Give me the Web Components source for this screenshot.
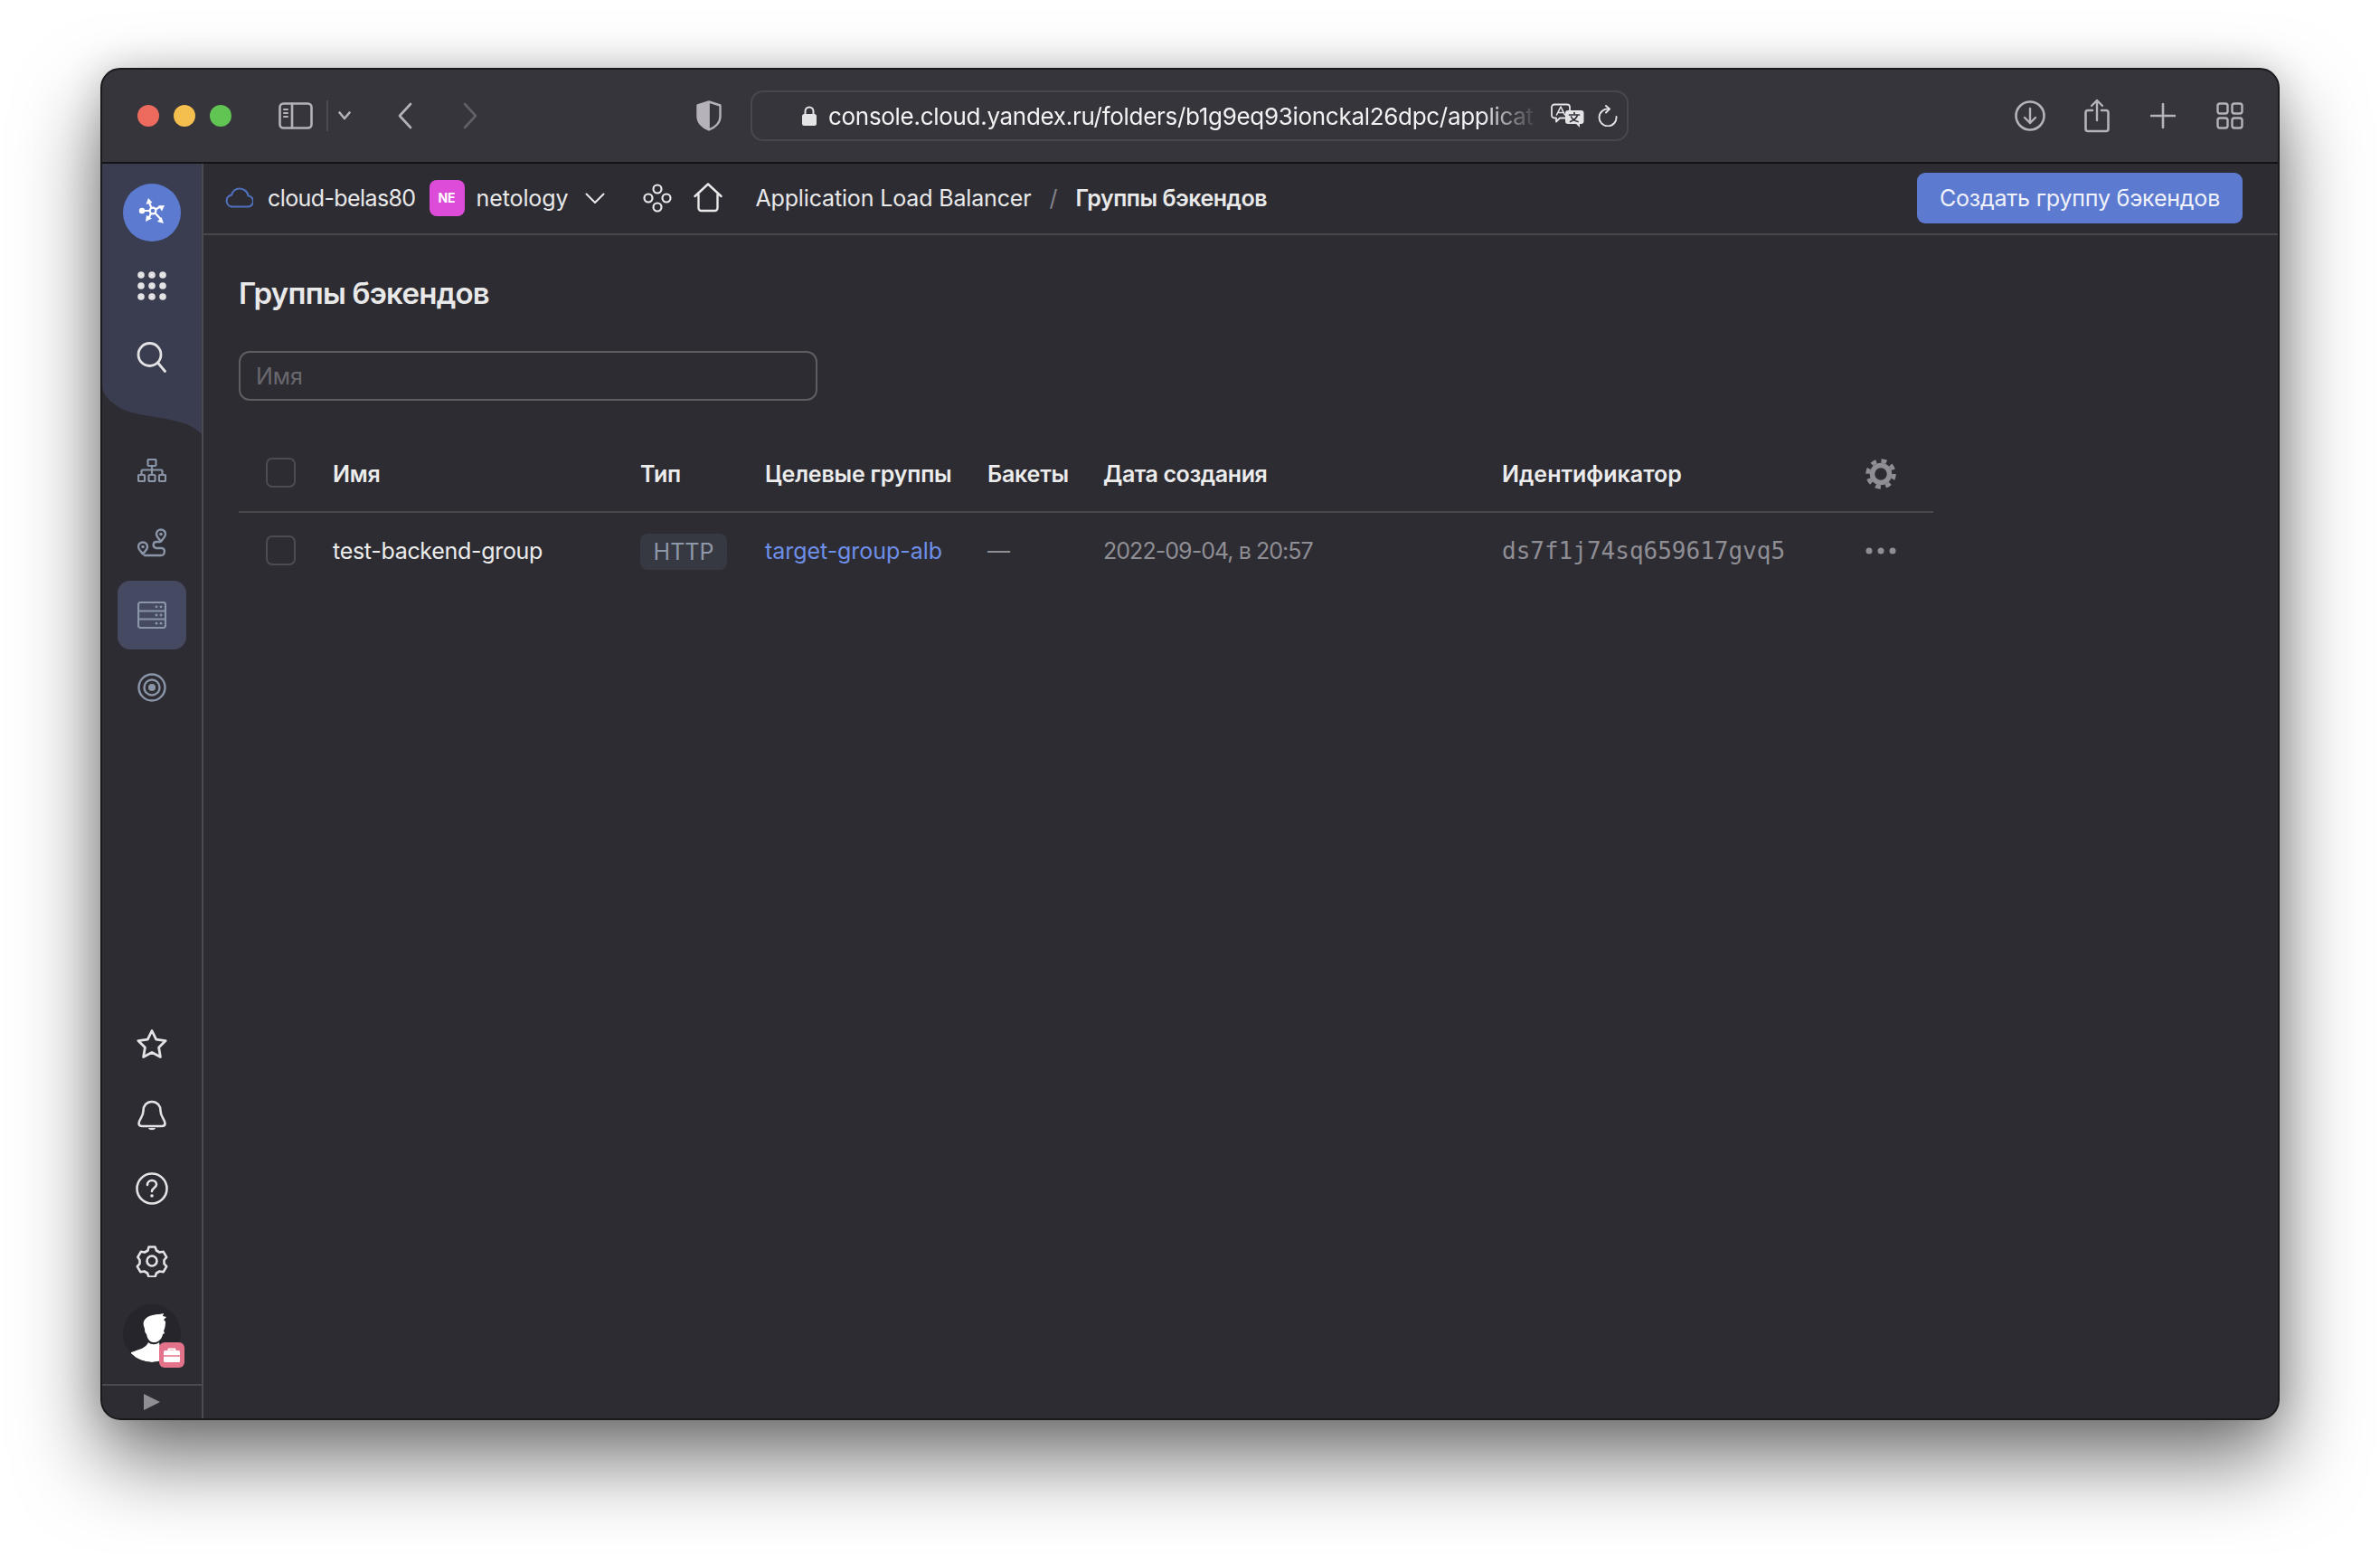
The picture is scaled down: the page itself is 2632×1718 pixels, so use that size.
<!doctype html>
<html>
<head>
<meta charset="utf-8">
<title>Группы бэкендов</title>
<style>
html,body{ margin:0; background:#fff; }
body{ width:2632px; height:1718px; overflow:hidden; font-family:"Inter","Noto Sans",sans-serif; }
</style>
</head>
<body>
<mac-window>
  <title-bar slot="top"></title-bar>
  <side-nav slot="side"></side-nav>
  <crumb-bar slot="crumbs"></crumb-bar>
  <backends-page></backends-page>
</mac-window>

<script>
// shared stroke helper for the small svg icons
const svg = (w, h, vb, body, extra = '') =>
  `<svg width="${w}" height="${h}" viewBox="${vb}" fill="none" stroke="currentColor" stroke-linecap="round" stroke-linejoin="round" ${extra}>${body}</svg>`;

customElements.define('mac-window', class extends HTMLElement {
  constructor(){ super(); this.attachShadow({mode:'open'});
    this.shadowRoot.innerHTML = `
    <style>
    :host{ display:block; padding:75px 111px 0 111px; }
    .win{
      width:2410px; height:1495px; box-sizing:border-box;
      background:#2d2c33; border-radius:22px; overflow:hidden;
      border:2px solid #1a1a1c;
      display:grid; grid-template-columns:112px 1fr; grid-template-rows:104px 79px 1fr;
    }
    .shadow{ border-radius:22px; box-shadow:0 44px 90px rgba(0,0,0,.55), 0 0 40px rgba(0,0,0,.16); width:2410px; }
    .top{ grid-column:1/-1; }
    .side{ grid-row:2/4; }
    </style>
    <div class="shadow"><div class="win">
      <div class="top"><slot name="top"></slot></div>
      <div class="side"><slot name="side"></slot></div>
      <div><slot name="crumbs"></slot></div>
      <div><slot></slot></div>
    </div></div>`;
  }
});

customElements.define('title-bar', class extends HTMLElement {
  constructor(){ super(); this.attachShadow({mode:'open'});
    this.shadowRoot.innerHTML = `
    <style>
    :host{ display:flex; height:104px; box-sizing:border-box; background:#37353c; border-bottom:2px solid #141416; align-items:center; padding:0 38px 0 39px; color:#b5b3b9; }
    .dot{ width:24px; height:24px; border-radius:50%; margin-right:16px; }
    svg{ display:block; flex:none; }
    .url{
      width:971px; height:56px; box-sizing:border-box; border:2px solid #49474e; border-radius:14px;
      margin-left:32px; display:flex; align-items:center; padding-left:55px; color:#e4e3e6; flex:none;
    }
    .addr{ font-size:26px; letter-spacing:-.3px; color:#f2f2f3; width:785px; margin-left:13px; white-space:nowrap; flex:none;
      -webkit-mask-image:linear-gradient(90deg,#000 92%,transparent 100%); mask-image:linear-gradient(90deg,#000 92%,transparent 100%); }
    </style>
    <span class="dot" style="background:#ed6a5e"></span>
    <span class="dot" style="background:#f5bf4f"></span>
    <span class="dot" style="background:#61c554;margin-right:0"></span>
    <span style="margin-left:52px">${svg(38,30,'0 0 38 30',`<rect x="1.5" y="1.5" width="35" height="27" rx="4" stroke-width="2.6"/><path d="M15 2v26" stroke-width="2.6"/><path d="M6 8h4M6 12h4M6 16h4" stroke-width="2"/>`)}</span>
    <span style="width:2px;height:34px;background:#4c4a51;margin-left:15px"></span>
    <span style="margin-left:11px">${svg(14,10,'0 0 14 10',`<path d="M1.5 1.5 7 8l5.500-6.500" stroke-width="2.600"/>`)}</span>
    <span style="margin-left:52px">${svg(16,30,'0 0 16 30',`<path d="M14 2 2 15l12 13" stroke-width="2.600"/>`)}</span>
    <span style="margin-left:56px;color:#626066">${svg(16,30,'0 0 16 30',`<path d="m2 2 12 13L2 28" stroke-width="2.600"/>`)}</span>
    <span style="margin-left:242px">${svg(28,34,'0 0 28 34',`<path d="M14 1.500 26.500 5.500V18c0 6-5 11.500-12.500 14.500C6.500 29.500 1.500 24 1.500 18V5.500Z" stroke-width="2.400"/><path d="M14 1.500 1.500 5.500V18c0 6 5 11.500 12.500 14.500Z" fill="currentColor" stroke-width="1"/>`)}</span>
    <div class="url">
      ${svg(16,22,'0 0 16 22',`<rect x="0" y="9" width="16" height="13" rx="2.500" fill="currentColor" stroke="none"/><path d="M3.500 9V6a4.500 4.500 0 0 1 9 0v3" stroke-width="2"/>`)}
      <span class="addr">console.cloud.yandex.ru/folders/b1g9eq93ionckal26dpc/applicat</span>
      ${svg(37,28,'0 0 37 28',`<path d="M4 1.500h14a3 3 0 0 1 3 3v9a3 3 0 0 1-3 3h-8l-4 4v-4H4a3 3 0 0 1-3-3v-9a3 3 0 0 1 3-3Z" stroke-width="1.800"/><path d="m6.500 13 4.500-9 4.500 9M8 10.500h6" stroke-width="1.600"/><path d="M19 8h14.500a3 3 0 0 1 3 3v9a3 3 0 0 1-3 3H32v4l-4-4h-9a3 3 0 0 1-3-3v-9a3 3 0 0 1 3-3Z" fill="currentColor" stroke="none"/><path d="M20.500 13h11M26 10.500V13M29.500 13c-1 4-4 6-8 7.500M22.500 15c1 2.500 3.500 4.500 7.500 5.500" stroke="#37353c" stroke-width="1.700"/>`,'style="margin-left:14px"')}
      ${svg(22,24,'0 0 22 24',`<path d="M12.500 4.500A9.500 9.500 0 1 0 20.500 13" stroke-width="1.900"/><path d="m9 1 4 3.500-4 4" stroke-width="1.900"/>`,'style="margin-left:15px"')}
    </div>
    <span style="flex:1"></span>
    ${svg(34,34,'0 0 34 34',`<circle cx="17" cy="17" r="15.500" stroke-width="2.600"/><path d="M17 9v16M11 19l6 6 6-6" stroke-width="2.400"/>`)}
    <span style="margin-left:43px">${svg(28,38,'0 0 28 38',`<path d="M9 13H4a2.500 2.500 0 0 0-2.500 2.500v18A2.500 2.500 0 0 0 4 36h20a2.500 2.500 0 0 0 2.500-2.500v-18A2.500 2.500 0 0 0 24 13h-5" stroke-width="2.600"/><path d="M14 24V2M8 8l6-6 6 6" stroke-width="2.400"/>`)}</span>
    <span style="margin-left:45px">${svg(28,28,'0 0 28 28',`<path d="M14 1v26M1 14h26" stroke-width="2.600"/>`)}</span>
    <span style="margin-left:45px">${svg(30,30,'0 0 30 30',`<rect x="1.500" y="1.500" width="11" height="11" rx="2.500" stroke-width="2.400"/><rect x="17.500" y="1.500" width="11" height="11" rx="2.500" stroke-width="2.400"/><rect x="1.500" y="17.500" width="11" height="11" rx="2.500" stroke-width="2.400"/><rect x="17.500" y="17.500" width="11" height="11" rx="2.500" stroke-width="2.400"/>`)}</span>
    `;
  }
});

customElements.define('nav-icon', class extends HTMLElement {
  constructor(){ super(); this.attachShadow({mode:'open'});
    this.shadowRoot.innerHTML = `
    <style>
    :host{ display:flex; align-items:center; justify-content:center; width:76px; height:76px; border-radius:14px; margin:0 auto; color:#e3e3e5; }
    :host([active]){ background:#454a62; }
    :host([dim]){ color:#8a95a8; }
    svg{ display:block; }
    </style><slot></slot>`;
  }
});

customElements.define('side-nav', class extends HTMLElement {
  constructor(){ super(); this.attachShadow({mode:'open'});
    this.shadowRoot.innerHTML = `
    <style>
    :host{ display:flex; flex-direction:column; height:100%; box-sizing:border-box; border-right:2px solid #4b4a50; color:#e3e3e5; }
    .head{ height:299px; flex:none; background:#3a3d50; display:flex; flex-direction:column; align-items:center; gap:3px; padding-top:22px; box-sizing:border-box;
      clip-path:path('M0 0H110V299C100 289 90 286 70 282C50 278 30 277 18 269C6 261 0 254 0 244Z'); }
    .logo{ width:64px; height:64px; border-radius:50%; background:#5c7bd0; display:flex; align-items:center; justify-content:center; margin-bottom:8px; }
    .mid{ margin-top:2px; display:flex; flex-direction:column; gap:4px; }
    .low{ margin-top:auto; }
    .low nav-icon{ margin-bottom:4px; }
    .ava{ position:relative; width:64px; height:64px; border-radius:50%; margin:10px auto 24px; background:#26252b; }
    .ava svg.man{ border-radius:50%; display:block; }
    .case{ position:absolute; right:-4px; bottom:-6px; width:28px; height:28px; border-radius:6px; background:#e4728a; display:flex; align-items:center; justify-content:center; }
    .foot{ border-top:2px solid #4b4a50; height:36px; display:flex; align-items:center; justify-content:center; }
    </style>
    <div class="head">
      <div class="logo"><svg width="64" height="64" viewBox="6 6 64 64" fill="none" stroke="#fff"><circle cx="39" cy="36" r="3.400" stroke-width="2.200"/><path d="M36 36h-8M37.500 33 35 27M42 34.500l6-3.500M41.500 38.500l6 6.500M37 39l-3 6" stroke-width="2.200"/><circle cx="27" cy="36" r="3.200" fill="#fff" stroke="none"/><path d="m34 22 4.500 5-7 2ZM52 30l-3 6.500-4-6ZM51 50l-7-2 4.500-5ZM31 48l1-7 6 3.500Z" fill="#fff" stroke="none"/></svg></div>
      <nav-icon>${svg(34,34,'0 0 34 34',`<g fill="currentColor" stroke="none"><circle cx="5" cy="5" r="3.800"/><circle cx="17" cy="5" r="3.800"/><circle cx="29" cy="5" r="3.800"/><circle cx="5" cy="17" r="3.800"/><circle cx="17" cy="17" r="3.800"/><circle cx="29" cy="17" r="3.800"/><circle cx="5" cy="29" r="3.800"/><circle cx="17" cy="29" r="3.800"/><circle cx="29" cy="29" r="3.800"/></g>`)}</nav-icon>
      <nav-icon>${svg(34,34,'0 0 34 34',`<circle cx="14.500" cy="14" r="12.500" stroke-width="2.800"/><path d="m23.500 23 8 9.500" stroke-width="2.800"/>`)}</nav-icon>
    </div>
    <div class="mid">
      <nav-icon dim>${svg(32,26,'0 0 32 26',`<g stroke-width="2.200"><rect x="11.500" y="1" width="9" height="7" rx="1"/><rect x="1" y="18" width="7" height="7" rx="1"/><rect x="12.500" y="18" width="7" height="7" rx="1"/><rect x="24" y="18" width="7" height="7" rx="1"/><path d="M16 8v10M4.500 18v-4a1.500 1.500 0 0 1 1.500-1.500h20a1.500 1.500 0 0 1 1.500 1.500v4"/></g>`)}</nav-icon>
      <nav-icon dim>${svg(32,32,'0 0 32 32',`<g stroke-width="2.400"><path d="M26 1.500a5 5 0 0 1 5 5c0 3-3.500 6-5 8-1.500-2-5-5-5-8a5 5 0 0 1 5-5Z"/><path d="M6 15.500a5 5 0 0 1 5 5c0 3-3.500 6-5 8-1.500-2-5-5-5-8a5 5 0 0 1 5-5Z"/><path d="M25 15h-4c-4 0-5 6 0 7h6c4 0 4 8-1 8H8"/></g><circle cx="26" cy="6.500" r="1.800" fill="currentColor" stroke="none"/><circle cx="6" cy="20.500" r="1.800" fill="currentColor" stroke="none"/>`)}</nav-icon>
      <nav-icon dim active>${svg(32,30,'0 0 32 30',`<g stroke-width="2.200"><rect x="1" y="1" width="30" height="28" rx="2.500"/><path d="M1 10.500h30M1 19.500h30"/></g><g fill="currentColor" stroke="none"><circle cx="21" cy="5.800" r="1.400"/><circle cx="26" cy="5.800" r="1.400"/><circle cx="21" cy="15" r="1.400"/><circle cx="26" cy="15" r="1.400"/><circle cx="21" cy="24.200" r="1.400"/><circle cx="26" cy="24.200" r="1.400"/></g>`)}</nav-icon>
      <nav-icon dim>${svg(32,32,'0 0 32 32',`<circle cx="16" cy="16" r="14.500" stroke-width="2.400"/><circle cx="16" cy="16" r="8.500" stroke-width="2.400"/><circle cx="16" cy="16" r="4" fill="currentColor" stroke="none"/>`)}</nav-icon>
    </div>
    <div class="low">
      <nav-icon>${svg(36,34,'0 0 36 34',`<path d="m18 2.500 4.700 9.600 10.500 1.500-7.600 7.400 1.800 10.500-9.400-5-9.400 5 1.800-10.500-7.600-7.400 10.500-1.500Z" stroke-width="2.800"/>`)}</nav-icon>
      <nav-icon>${svg(34,36,'0 0 34 36',`<path d="M17 2c6 0 9.500 4.500 9.500 10 0 7 5 9.500 5 14 0 2-1.500 3-3.500 3H6c-2 0-3.500-1-3.500-3 0-4.500 5-7 5-14C7.500 6.500 11 2 17 2Z" stroke-width="2.600"/><path d="M13 31c1 3 7 3 8 0Z" fill="currentColor" stroke="none"/>`)}</nav-icon>
      <nav-icon>${svg(36,36,'0 0 36 36',`<circle cx="18" cy="18" r="16.500" stroke-width="2.600"/><path d="M13 14c0-3 2.200-5 5-5s5 2 5 4.500c0 3.500-5 4-5 7.500" stroke-width="2.600"/><circle cx="18" cy="26" r="1.800" fill="currentColor" stroke="none"/>`)}</nav-icon>
      <nav-icon>${svg(36,36,'0 0 36 36',`<path d="M14.500 2.500h7l1.500 4 3.500 2 4.200-.7 3.500 6-2.700 3.200v4l2.700 3.200-3.500 6-4.200-.7-3.500 2-1.500 4h-7l-1.500-4-3.500-2-4.200.7-3.500-6 2.700-3.200v-4L2.300 13.800l3.500-6 4.200.7 3.500-2Z" stroke-width="2.600"/><circle cx="18" cy="18" r="5.500" stroke-width="2.600"/>`)}</nav-icon>
      <div class="ava">
        <svg class="man" width="64" height="64" viewBox="0 0 64 64"><defs><clipPath id="c"><circle cx="32" cy="32" r="32"/></clipPath></defs><g clip-path="url(#c)" fill="#fff"><path d="M23 19C25 13 34 11 40 11l5-1-1 3 4 1-3 3 2 2c0 5-1 9-2 10l1 3-2 1c-1 5-4 8-8 9h-3c-4-1-6-4-7-9-2-2-2-4-2-6-1-3-2-5-1-8Z"/><path d="M9 53c9-3 17-5 19-11 3 3 9 3 12 0l4 22H9Z"/></g></svg>
        <span class="case">${svg(18,16,'0 0 18 16',`<path d="M5.500 3V1.500h7V3" stroke="#fff" stroke-width="1.800"/><rect x="0" y="3" width="18" height="13" rx="1.500" fill="#fff" stroke="none"/><path d="M0 9h18" stroke="#e4728a" stroke-width="1.500"/>`)}</span>
      </div>
      <div class="foot">${svg(20,20,'0 0 20 20',`<path d="M1 1v18l18-9Z" fill="#8f8f93" stroke="none"/>`)}</div>
    </div>`;
  }
});

customElements.define('crumb-bar', class extends HTMLElement {
  constructor(){ super(); this.attachShadow({mode:'open'});
    this.shadowRoot.innerHTML = `
    <style>
    :host{ display:flex; align-items:center; height:79px; box-sizing:border-box; border-bottom:2px solid #48474c; padding:0 39px 2px 24px; font-size:25px; color:#e9e9ea; white-space:nowrap; }
    svg{ display:block; flex:none; }
    .ne{ width:39px; height:40px; border-radius:8px; background:#dc4cd8; color:#fff; font-size:14px; font-weight:700; display:flex; align-items:center; justify-content:center; margin:0 13px 0 15px; flex:none; }
    b{ font-weight:600; letter-spacing:-.45px; }
    .btn{ margin-left:auto; height:56px; width:360px; justify-content:center; letter-spacing:-.2px; border-radius:9px; background:#5c7bd0; color:#f0f2fb; display:flex; align-items:center; }
    </style>
    <span style="color:#4f70bd">${svg(31,23,'0 0 31 23',`<path d="M8 21.500a6.500 6.500 0 0 1-1-12.900C8.500 4 12 1.500 16 1.500c5 0 9 3.500 9.500 8a6 6 0 0 1-1 12Z" stroke-width="2.200"/>`)}</span>
    <span style="margin-left:16px;letter-spacing:-.6px">cloud-belas80</span>
    <span class="ne">NE</span>
    <span style="letter-spacing:-.1px">netology</span>
    <span style="margin-left:19px">${svg(22,12,'0 0 22 12',`<path d="m1.500 1.500 9.500 9.500 9.500-9.500" stroke-width="2"/>`)}</span>
    <span style="margin-left:42px">${svg(32,32,'0 0 32 32',`<g stroke-width="2.200"><circle cx="16" cy="6" r="4.500"/><circle cx="6" cy="16" r="4.500"/><circle cx="26" cy="16" r="4.500"/><circle cx="16" cy="26" r="4.500"/></g>`)}</span>
    <span style="margin-left:24px">${svg(32,33,'0 0 32 33',`<path d="M1.500 15 16 1.500 30.500 15M5.500 13v15a3 3 0 0 0 3 3h15a3 3 0 0 0 3-3V13" stroke-width="2.400"/>`)}</span>
    <span style="margin-left:36px;letter-spacing:-.15px">Application Load Balancer</span>
    <span style="margin:0 20px;color:#85848a">/</span>
    <b>Группы бэкендов</b>
    <span class="btn">Создать группу бэкендов</span>`;
  }
});

customElements.define('backends-page', class extends HTMLElement {
  constructor(){ super(); this.attachShadow({mode:'open'});
    this.shadowRoot.innerHTML = `
    <style>
    :host{ display:block; padding:42px 0 0 39px; color:#ececed; font-size:25px; }
    h1{ margin:0; font-size:33px; letter-spacing:-.75px; line-height:44px; font-weight:600; color:#e9e9ea; }
    .search{ margin-top:42px; width:640px; height:55px; box-sizing:border-box; border:2px solid #5e5d62; border-radius:12px; padding:0 17px; display:flex; align-items:center; color:#69686d; }
    .tbl{ margin-top:44px; width:1874px; display:grid;
      grid-template-columns:104px 340px 138px 246px 128px 441px 402px 1fr; align-items:center; }
    .tbl > *{ white-space:nowrap; }
    .h{ height:80px; display:flex; align-items:center; padding-bottom:4px; font-weight:600; letter-spacing:-.2px; border-bottom:2px solid #48474c; box-sizing:border-box; }
    .c{ height:84px; display:flex; align-items:center; letter-spacing:-.3px; }
    .ck{ width:33px; height:33px; box-sizing:border-box; border:2px solid #4d4c52; border-radius:7px; margin:-3px 0 0 30px; }
    .c .ck{ margin-top:-1px; }
    .tag{ height:40px; width:96px; box-sizing:border-box; justify-content:center; margin-top:2px; background:#363941; color:#8f98a8; border-radius:8px; display:flex; align-items:center; }
    a{ color:#6d8fe8; text-decoration:none; letter-spacing:-.05px; }
    .mute{ color:#8f8e94; }
    .id{ font-family:"DejaVu Sans Mono","Liberation Mono",monospace; font-size:26px; letter-spacing:0; color:#8f8e94; }
    .tool{ color:#8f8e94; }
    .tool svg{ display:block; }
    </style>
    <h1>Группы бэкендов</h1>
    <div class="search">Имя</div>
    <div class="tbl">
      <div class="h"><span class="ck"></span></div>
      <div class="h">Имя</div><div class="h">Тип</div><div class="h">Целевые группы</div><div class="h">Бакеты</div><div class="h" style="letter-spacing:-.4px">Дата создания</div><div class="h" style="letter-spacing:0">Идентификатор</div>
      <div class="h tool">${svg(34,34,'0 0 34 34',`<circle cx="17" cy="17" r="9.500" stroke-width="5.500"/><circle cx="17" cy="17" r="14.500" stroke-width="4.500" stroke-linecap="butt" stroke-dasharray="5.900 5.490"/>`)}</div>
      <div class="c"><span class="ck"></span></div>
      <div class="c">test-backend-group</div>
      <div class="c" style="letter-spacing:0"><span class="tag">HTTP</span></div>
      <div class="c"><a>target-group-alb</a></div>
      <div class="c mute">—</div>
      <div class="c mute" style="letter-spacing:-.95px">2022-09-04, в 20:57</div>
      <div class="c id">ds7f1j74sq659617gvq5</div>
      <div class="c tool">${svg(34,8,'0 0 34 8',`<g fill="currentColor" stroke="none"><circle cx="4" cy="4" r="3.500"/><circle cx="17" cy="4" r="3.500"/><circle cx="30" cy="4" r="3.500"/></g>`)}</div>
    </div>`;
  }
});
</script>
</body>
</html>
